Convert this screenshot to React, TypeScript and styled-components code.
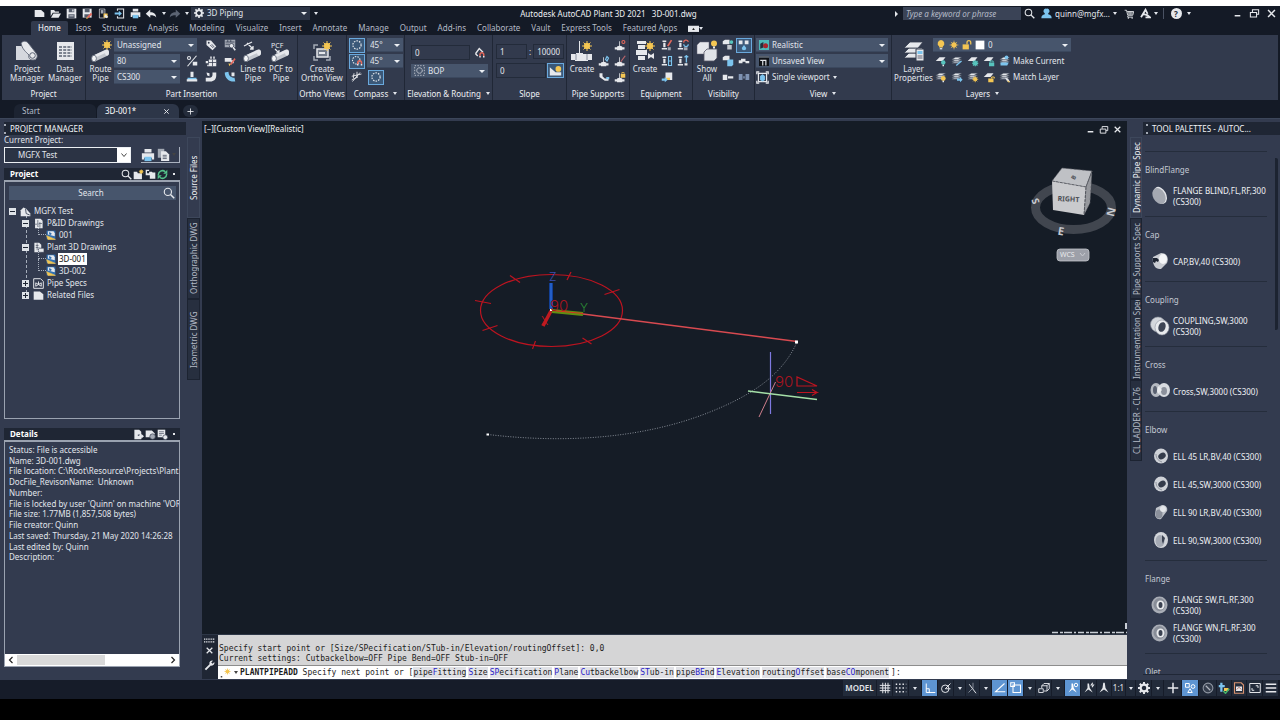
import React from "react";
import styled, { createGlobalStyle, css } from "styled-components";

const UI = `"Noto Sans", "Open Sans", sans-serif`;
const MONO = `"DejaVu Sans Mono", "Liberation Mono", monospace`;
const C = {
  chrome: "#141a26",
  panel: "#323a4d",
  dock: "#333b4f",
  well: "#1f2634",
  field: "#47556c",
  canvas: "#151c26",
  text: "#e2e6ec",
  dim: "#b4bac6",
  line: "#202736",
  active: "#5e95d2",
};

const Global = createGlobalStyle`
  * { box-sizing: border-box; }
  html, body { margin: 0; padding: 0; background: #000; }
  body { font-family: ${UI}; font-size: 8px; line-height: 10px; color: ${C.text}; }
  button, input, select { font: inherit; color: inherit; margin: 0; padding: 0; border: 0; background: none; border-radius: 0; min-width: 0; }
  ul { list-style: none; margin: 0; padding: 0; }
`;

/* ---------- icons ---------- */
const W = "#e6e8ec";
const G = "#a3a9b4";
const B = "#7cc4ee";
const Y = "#f4c653";
const R = "#e2685c";
const T = "#57c3bd";

const sun = (x: number, y: number, r: number) => (
  <g stroke={Y} strokeWidth={1} fill={Y}>
    <circle cx={x} cy={y} r={r * 0.55} />
    <path d={`M${x - r} ${y}H${x + r}M${x} ${y - r}V${y + r}M${x - r * 0.7} ${y - r * 0.7}L${x + r * 0.7} ${y + r * 0.7}M${x + r * 0.7} ${y - r * 0.7}L${x - r * 0.7} ${y + r * 0.7}`} />
  </g>
);
const magnet = (x: number, y: number) => (
  <g fill="none" strokeWidth={2}>
    <path stroke={R} d={`M${x} ${y + 4}V${y + 2}a2.5 2.5 0 0 1 5 0V${y + 4}`} />
    <path stroke={W} d={`M${x} ${y + 4}v2M${x + 5} ${y + 4}v2`} />
  </g>
);
const stack = (
  <g stroke="#4a5263" strokeWidth={0.6}>
    <path fill={G} d="M1 11l5-3h8l-5 3z" />
    <path fill="#c8ccd3" d="M1 8.500l5-3h8l-5 3z" />
    <path fill={W} d="M1 6l5-3h8l-5 3z" />
  </g>
);
const sheet = <path fill={W} d="M1 8l5-5h8l-4 5z" />;
const pipe = (
  <g>
    <path fill="#c3c7ce" d="M3 15.500l13-6a3 3.500 0 0 1 2 6l-13 6z" />
    <path fill={W} d="M2.500 16l13-6a3 3 0 0 1 2 2l-13 6z" />
    <ellipse cx="4" cy="18.500" rx="2.400" ry="3.200" fill="#f4f5f7" stroke="#5b6374" strokeWidth=".8" />
    <ellipse cx="17" cy="12.500" rx="2" ry="3" fill={W} />
  </g>
);
const vessel = (
  <g fill={W}>
    <path d="M2 2h5v2H2zM3 5h3v6H3zM1 12h7v2H1z" />
  </g>
);
const tee = <path fill={W} d="M1 11h3v-1l3-1V3h1v6l3 1v1h3v3h-3v1H4v-1H1z" />;

const ICONS: Record<string, React.ReactNode> = {
  new: <path fill={W} d="M1 3h9l5 4v6H1zM10 2.500l4.500 4H10z" />,
  open: <><path fill={W} d="M1 3h5l1.500 2H13v2H4l-3 5z" /><path fill={W} d="M5 8h11l-3.500 6H1.500z" /></>,
  save: <><path fill={W} d="M1 1h14v14H1z" /><path fill="#555d6c" d="M4 1h8v5H4zM3.500 9h9v6h-9z" /><path fill={W} d="M9 2h2v3H9zM5 11h6v1H5z" /></>,
  saveas: <><path fill={W} d="M1 1h13v13H1z" /><path fill="#555d6c" d="M4 1h7v5H4zM3.500 9h8v5h-8z" /><path fill={R} d="M7 13l6-6 2 2-6 6z" /><path fill={Y} d="M7 13l-1 3 3-1z" /></>,
  web: <><path fill="none" stroke={W} d="M2 1.500h8v13H2z" /><path fill={G} d="M4 3h4v5H4z" /><path fill={Y} d="M8 8h6v6H8z" /><path fill={W} d="M11 9l4 4-3 2-3-3z" /></>,
  cloud: <><path fill="none" stroke={W} strokeWidth="1.500" d="M5 4V1.500h9v13H5V12" /><path fill={B} d="M1 6.500h6V4l4.500 4L7 12V9.500H1z" /></>,
  print: <><path fill={W} d="M4 1h8v4H4zM1 6h14v7h-2.500v-2h-9v2H1z" /><path fill={B} d="M4 10h8v5H4z" /></>,
  undo: <path fill={W} d="M7 2v3.500c5 0 7.500 2 8 7C13 10 11 9.500 7 9.500V13L1 7.500z" />,
  redo: <path fill="#5b6373" d="M9 2v3.500c-5 0-7.500 2-8 7C3 10 5 9.500 9 9.500V13l6-5.500z" />,
  gear: <><circle cx="8" cy="8" r="4.500" fill="none" stroke={W} strokeWidth="3" /><path stroke={W} strokeWidth="2.600" d="M8 0v4M8 12v4M0 8h4M12 8h4M2.300 2.300l3 3M10.700 10.700l3 3M13.700 2.300l-3 3M5.300 10.700l-3 3" /><circle cx="8" cy="8" r="2.400" fill="#232b3a" /></>,
  lens: <><circle cx="6.500" cy="6.500" r="4.800" fill="none" stroke={W} strokeWidth="1.500" /><path stroke={W} strokeWidth="2" d="M10 10l5 5" /></>,
  user: <path fill={B} d="M8 1a3.500 3.500 0 0 1 2.500 6.500V9c3 .5 5 2 5 6H.5c0-4 2-5.500 5-6V7.500A3.500 3.500 0 0 1 8 1z" />,
  cart: <><path fill="none" stroke={W} strokeWidth="1.400" d="M1 2h3l2 8h8l1.500-6H5M6 11v2h8" /><path stroke={W} d="M6 6h9M7 8h7M8 4v6M11 4v6" /><circle cx="7" cy="14.500" r="1.200" fill={W} /><circle cx="13" cy="14.500" r="1.200" fill={W} /></>,
  adsk: <path fill="none" stroke={W} strokeWidth="2.600" d="M1.500 13.500L8 2.500l3 6M4 9.500c4-1 8 1 10.500 4H8" />,
  min: <path stroke={W} strokeWidth="2.600" d="M3 12h10" />,
  restore: <path fill="none" stroke={W} strokeWidth="1.500" d="M5 6V2.500h9V9h-3M2 6.500h9V13H2z" />,
  close: <path stroke={W} strokeWidth="2.200" d="M3 3l10 10M13 3L3 13" />,
  plus: <path stroke={W} strokeWidth="2" d="M8 1v14M1 8h14" />,
  tag: <><path fill={W} d="M2 2h6l7 8-5 5-8-7z" /><circle cx="5" cy="5" r="1.200" fill={C.panel} /><path stroke={C.panel} d="M7 8l4 4M9 7l3.500 4" /></>,
  find: <><path fill={G} d="M1 1h14v10H1z" /><path stroke={C.panel} d="M2 4h12M2 7h5M5 1v3M9 1v3" /><circle cx="10" cy="9" r="3" fill={W} stroke={C.panel} /><path stroke={W} strokeWidth="2" d="M12 11l3 4" /></>,
  slashes: <><circle cx="4" cy="4" r="2" fill="none" stroke={W} strokeWidth="1.500" /><path stroke={W} strokeWidth="1.500" d="M14 1L2 15" /><path fill={W} d="M9 9h6v5H9z" /></>,
  valve: <><path fill={W} d="M5 6h10v9H5z" /><path stroke={C.panel} d="M5 10h10M10 6v9" /><path fill={W} d="M1 8h3v3H1zM7 2h2v3H7zM11 2h2v3h-2zM3 13h2v2H3z" /></>,
  pipepen: <><path fill={W} d="M1 4h9v3h3v4H9V9H1z" /><path fill={R} d="M8 12l6-8 1.500 1.500-6 8z" /><path fill={Y} d="M6 11l3 1-2 3z" /></>,
  down: <><path fill={W} d="M6 1h4v7H6z" /><path fill={B} d="M2 9h12v3H2z" /><path fill={W} d="M1 11h14v3H1z" /></>,
  elbow: <path fill={W} d="M1 9h5c3 0 4-2 4-4V2h5v4c0 5-3 8-8 8H1zM2 2l4 1v4L3 6z" />,
  bend: <><path fill={B} d="M1 2l5-1c0 5 3 8 8 8l1 5C7 15 1 10 1 2z" /><path fill={W} d="M10 2h4v5h-4z" /></>,
  compass: <circle cx="8" cy="8" r="5.500" fill="none" stroke={W} strokeWidth="1.600" strokeDasharray="2 1.500" />,
  compassMag: <><circle cx="7" cy="7" r="5" fill="none" stroke={W} strokeWidth="1.500" strokeDasharray="2 1.500" />{magnet(9, 8)}</>,
  hatch: <path stroke={W} strokeWidth="1.200" fill="none" d="M2 14l10-12M1 7l13-3M4 3l-1 7M8 1v8M1 12l8-4" />,
  plane: <><path fill="none" stroke={W} strokeWidth="1.800" d="M2 9l5-7 5 5M2 9l3 3" />{magnet(8, 8)}</>,
  bop: <><circle cx="8" cy="8" r="4" fill="none" stroke={W} strokeWidth="1.400" strokeDasharray="2 1" /><path fill="none" stroke={W} strokeDasharray="2 2" d="M1 1h14v14H1z" /></>,
  slope: <><path fill={W} d="M1 4l7 6h7v4H1z" /><circle cx="11.500" cy="6" r="3.500" fill={Y} /></>,
  support: <>{tee}<circle cx="12.500" cy="4" r="2" fill="none" stroke={R} strokeWidth="1.500" /></>,
  supportB: <>{tee}<path fill="none" stroke={B} strokeWidth="1.600" d="M10 6l2-4 2 2-2 4z" /></>,
  supportC: <>{tee}<path stroke="#b9656a" strokeWidth="1.600" d="M9 9l6-8" /></>,
  supportD: <><path fill={W} d="M2 3h4v4l3 3h5v3H9L2 8z" /><path fill={B} d="M11 8h4v3h-4z" /></>,
  supportL: <>{tee}<path fill={Y} d="M9 4h6v5H9z" /><path fill="none" stroke={Y} d="M10.500 4V2h3v2" /></>,
  equipPen: <>{vessel}<path fill={R} d="M8 9l5-8 2 1-5 8z" /><path fill={G} d="M9 11h4v4H9z" /></>,
  equipX: <>{vessel}<path fill="none" stroke={R} strokeWidth="1.500" d="M9 5a3 3 0 0 1 6-1" /><path fill="none" stroke={B} strokeWidth="1.500" d="M9 7a3 3 0 0 0 6 0" /><path fill={G} d="M9 11h5v4H9z" /></>,
  equipA: <>{vessel}<path fill="none" stroke={B} strokeWidth="1.500" d="M10 2h4v6h-4zM10 8h4v6h-4z" /></>,
  equipB: <>{vessel}<path fill="none" stroke={B} strokeWidth="1.800" d="M12.500 1v9M10 3l2.500-2L15 3" /><path fill={W} d="M10 11h4v3h-4z" /></>,
  equipIn: <><path fill={W} d="M6 2h9v10H6z" /><path fill={Y} d="M7 9h5v3H7z" /><path fill={B} d="M1 10h4V8l4 3.500-4 3.500v-2H1z" /></>,
  cubes: <><path fill={W} d="M1 3l3-2h6v6H1z" /><path fill="#c3c7ce" d="M7 8h6v6H7z" /><circle cx="12.500" cy="4" r="2.500" fill={T} /></>,
  cubesB: <><path fill={W} d="M1 3l3-2h6v6H1z" /><path fill={B} d="M7 7l2-1h6v7l-2 2H7z" /></>,
  network: <><path fill={W} d="M1 2h5v5H1zM9 2h5v5H9z" /><path fill={B} d="M8 8l3 4a3 3 0 1 1-6 0z" /></>,
  fitting: <path fill={W} d="M1 7h3V5h6v3h5v3h-5V9H6v2H1z" />,
  fitting2: <path fill={W} d="M1 5h6v7H1zM8 7h7v3H8z" />,
  fitting3: <path fill="#7f93b3" d="M1 4h5v8H1zM7 7h2v3H7zM10 4h5v8h-5z" />,
  realistic: <><path fill="#4fb8b8" d="M0 0h16v16H0z" /><path fill="#24303d" d="M2 6l5-3v9l-5 2z" /><circle cx="10.500" cy="9" r="4" fill="#a7242c" /></>,
  unsaved: <><path fill="#0f1217" d="M0 0h16v16H0z" /><path fill="#59606b" d="M0 0h16v3H0z" /><path fill="none" stroke={W} strokeWidth="1.800" d="M6 15V7h5v8M2 7h3" /></>,
  viewport: <><path fill="none" stroke={W} strokeWidth="1.500" d="M1 4V1h3M12 1h3v3M15 12v3h-3M4 15H1v-3M3 3h10v10H3z" /><path fill={B} d="M5 6l3-2 3 2v5l-3 2-3-2z" /></>,
  bulb: <><path fill={Y} d="M8 0a5.500 5.500 0 0 1 3 10v2h-6v-2A5.500 5.500 0 0 1 8 0z" /><path fill={W} d="M6 13h4v2H6z" /></>,
  sun: sun(8, 8, 7),
  unlock: <><path fill={Y} d="M1 7h10v8H1z" /><path fill="none" stroke={Y} strokeWidth="2" d="M8 7V4a3 3 0 0 1 6 0v3" /></>,
  swatch: <path fill="#fff" d="M1 1h14v14H1z" />,
  layBulb: <>{sheet}<circle cx="11" cy="10" r="3" fill={T} /><path fill={W} d="M10 13h2v2h-2z" /></>,
  layFreeze: <>{sheet}<path stroke={T} strokeWidth="1.800" d="M7 11h8M11 7v8M8 8l6 6M14 8l-6 6" /></>,
  layLock: <>{sheet}<path fill={T} d="M8 10h7v5H8z" /><path fill="none" stroke={T} strokeWidth="1.300" d="M9.500 10V8h4v2" /></>,
  layUnlock: <>{sheet}<path fill={Y} d="M7 10h7v5H7z" /><path fill="none" stroke={Y} strokeWidth="1.300" d="M11.500 10V8H15v2" /></>,
  layMake: <>{stack}<path fill={B} d="M2 10h11l-2 4H2z" /><circle cx="10" cy="3" r="2.500" fill={B} /></>,
  layMatch: <>{stack}<path fill={W} d="M8 9l4 1 3 5-4-1z" /><path fill={Y} d="M11 12l4 3h-3z" /></>,
  layBulb2: <>{stack}<circle cx="11" cy="10" r="3.200" fill={Y} /><path fill={W} d="M10 13h2v2h-2z" /></>,
  layWalk: <>{stack}<path stroke={B} strokeWidth="1.800" d="M7 14l7-6" /></>,
  layPrev: <>{stack}<path fill={B} d="M8 10h4V8l3.500 3.500L12 15v-2H8z" /></>,
  laySun: <>{stack}{sun(11, 11, 4)}</>,
  docCopy: <><path fill={G} d="M1 1h8v11H1z" /><path fill={W} d="M5 4h6l4 4v8H5z" /><path stroke="#4a5263" d="M7 9h5M7 11h5M7 13h5" /></>,
  folderNew: <><path fill={W} d="M1 4h5l1 2h6v9H1z" />{sun(12, 4, 3.5)}</>,
  copyTree: <path fill={W} d="M1 1h5v2H3v3h3V4h4l1 1h4v9H7V9H1z" />,
  refresh: <><path fill="none" stroke="#54c08a" strokeWidth="2.200" d="M2 9a6 6 0 0 1 10-5M14 7a6 6 0 0 1-10 5" /><path fill="#54c08a" d="M15 1v6H9zM1 15V9h6z" /></>,
  project: <><path fill={W} d="M1 6l4-4 4 2 6 7v4H1z" /><path fill="none" stroke={C.dock} strokeWidth="1.200" d="M8 4l1 7 5 2" /></>,
  pid: <><path fill={W} d="M3 1h8l3 3v11H3z" /><path stroke="#4a5263" fill="none" d="M1 9h5M7 3v10M10 6v8M7 8h6" /></>,
  plant: <><path fill={W} d="M2 1h7l3 3v11H2z" /><path stroke="#4a5263" d="M4 5h4M4 8h5M6 2v10" /><path fill={W} stroke={C.dock} d="M8 9h8v6H8z" /></>,
  dwg: <><path fill="#2f6fb3" d="M1 1h14v14H1z" /><path fill={W} d="M3 2h9l2 3v5L3 7z" /><path fill="#2f6fb3" d="M5 3l4 2-1 3-3-1z" /><path fill={Y} d="M1 9l14 6H3z" stroke={Y} /></>,
  spec: <><path fill="none" stroke={W} strokeWidth="1.400" d="M1 1h10l4 4v10H1z" /><path fill="none" stroke={W} strokeWidth="1.400" d="M4 7l8 5V7l-8 5zM8 5v4" /></>,
  folder: <path fill={W} d="M1 2h9l5 4v8H1z" />,
  detA: <><path fill={W} d="M2 1h7l3 3v11H2z" /><path fill="#4a5263" d="M7 8h3v2H7z" /><path fill={W} d="M9 9h3V7l4 3.500-4 3.500v-2H9z" /></>,
  detB: <><path fill={W} d="M1 2h9l4 4v6H1z" /><circle cx="11" cy="11" r="4" fill={G} stroke="#3a4253" /></>,
  detC: <><path fill={W} d="M1 1h11v11H1z" /><path stroke="#4a5263" d="M3 4h7M3 6.500h7M3 9h4" /><circle cx="12" cy="12" r="3.500" fill={W} stroke="#3a4253" /></>,
  wrench: <path fill={W} d="M1 13l7-7a4 4 0 0 1 5-5l-2.500 2.500 2 2L15 3a4 4 0 0 1-5 5l-7 7z" />,
  grip: <path stroke={W} strokeWidth="2" strokeDasharray="1.600 1" d="M0 6h16M0 10h16" />,
  cmd: <><path fill="#444" d="M1 12h2v2H1z" />{sun(10, 6, 4)}</>,
  grid: <path stroke={W} strokeWidth="1.300" d="M5 1v14M8.500 1v14M12 1v14M1 4.500h14M1 8h14M1 11.500h14" />,
  dots: <path stroke={W} strokeWidth="1.900" strokeDasharray="1.900 2.600" d="M1 3h14M1 8h14M1 13h14" />,
  ortho: <path fill="none" stroke="#fff" strokeWidth="1.300" d="M3 2v12h12M3 9h4v5" />,
  polar: <><circle cx="7" cy="9" r="5" fill="none" stroke={W} strokeWidth="1.300" /><path stroke={W} strokeWidth="1.300" fill="none" d="M7 9l7-7M7 9h7" /></>,
  iso: <><path stroke={W} strokeWidth="1.300" d="M3 3l9 12" /><path stroke={G} d="M8 1v8M2 14l5-5" /></>,
  angle: <path fill="none" stroke="#fff" strokeWidth="1.400" d="M14 2L2 13h13" />,
  osnap: <><path fill="none" stroke="#fff" strokeWidth="1.400" d="M4 4h10v10H4z" /><path fill="none" stroke="#fff" strokeWidth="1.400" d="M1 1h5v5H1z" /></>,
  cube: <path fill="none" stroke={W} strokeWidth="1.200" d="M5 5l3-3h7v7l-3 3H8M5 8V5h7v7M12 5l3-3M1 9h6v5H1z" />,
  annA: <><path fill="#fff" d="M6 2h2l1 6 4 6-6-4-5 4 4-6z" /><circle cx="12" cy="4" r="2.300" fill="none" stroke="#fff" strokeWidth="1.300" /></>,
  annB: <><path fill={W} d="M6 2h2l1 6 4 6-6-4-5 4 4-6z" /><path stroke={W} strokeWidth="1.500" fill="none" d="M13 1l-2 3h3l-2 3" /></>,
  annC: <path fill={W} d="M7 1h2l1 7 4 6-6-4-6 4 4-6z" />,
  isolate: <><path fill="none" stroke="#fff" strokeWidth="1.300" d="M2 2h5v5H2zM5 14l3-5 3 5z" /><circle cx="12" cy="6" r="2.500" fill="none" stroke="#fff" strokeWidth="1.300" /></>,
  perf: <><circle cx="8" cy="8" r="6.500" fill="#353e4d" stroke="#8f96a2" strokeWidth="1.400" /><path stroke="#aeb4be" strokeWidth="1.600" d="M5 5l6 6" /></>,
  units: <><path fill={B} d="M1 4h8v3H1zM3 1h3v12H3z" /><path fill={Y} d="M8 8h6v4H8z" /><path fill="none" stroke="#45b36b" strokeWidth="2" d="M7 12l3 3 5-6" /></>,
  pdf: <><path fill="none" stroke="#d8926f" strokeWidth="1.500" d="M2 1h9l3 3v11H2z" /><path fill={W} d="M4 6h8v6H4z" /><path fill="none" stroke="#a44c3a" d="M5 10l3-3 3 3" /></>,
  full: <><path fill="none" stroke={W} strokeWidth="1.300" d="M1 2h14v12H1z" /><path stroke={W} strokeWidth="1.300" fill="none" d="M9 5h3v3M7 11H4V8" /></>,
  menu: <path stroke={W} strokeWidth="1.800" d="M1 3h14M1 8h14M1 13h14" />,
  chev: <path fill="none" stroke="#333" strokeWidth="1.800" d="M3 5l5 6 5-6" />,
  left: <path fill="none" stroke="#222" strokeWidth="2.400" d="M11 2L5 8l6 6" />,
  right: <path fill="none" stroke="#222" strokeWidth="2.400" d="M5 2l6 6-6 6" />,
  upbox: <><path fill={W} d="M0 4h16v9H0z" /><path fill="#222" d="M6 10l2-3 2 3z" /></>,
};

const Svg = styled.svg`display: block; flex: none;`;
const Icon = ({ n, s = 12 }: { n: string; s?: number }) => (
  <Svg width={s} height={s} viewBox="0 0 16 16" aria-hidden="true">{ICONS[n]}</Svg>
);

const BIG: Record<string, React.ReactNode> = {
  project: <><path fill="#d5d8de" d="M0 6h12l8 14H0z" /><path fill={W} stroke="#596172" strokeWidth=".9" d="M5 3c3-3 6-2 8 1l7 9c3 4 0 7-3 7s-5-2-4-5c-3-3-7-6-8-12z" /><circle cx="16.500" cy="15.500" r="2.800" fill="none" stroke="#596172" /></>,
  data: <><path fill={W} d="M3 2h17v18H3z" /><path stroke="#596172" strokeWidth="1.400" strokeDasharray="3 1.200" d="M5 7h13M5 10h13M5 13h13M5 16h13" /></>,
  route: <>{pipe}{sun(17, 5, 5)}</>,
  line: <><path stroke={W} strokeWidth="1.300" fill="none" d="M2 6l8-4M5 3l6 6M11 6v3H8" />{pipe}</>,
  pcf: <><path stroke={W} strokeWidth="1.200" fill="none" d="M5 9l4 4M9 10v3H6" /><text x="1" y="8" fontSize="7" fontFamily={UI} fill={W}>PCF</text>{pipe}</>,
  ortho: <><path fill="none" stroke={G} strokeWidth="1.500" d="M7 5H3v4M3 16v4h4M15 20h4v-4" /><path fill="#747c8a" stroke={W} strokeWidth="1.500" d="M6 9h11v8H6z" /><path stroke={W} d="M8 13h6" strokeWidth="2" />{sun(16, 6, 5)}</>,
  support: <><path fill={W} d="M8 1h1v12h3v1h9v6h-4v1H4v-1H0v-6h5v-1h3z" /><path stroke="#8a91a0" d="M5 14v6M16 14v6" />{sun(16, 6, 5)}</>,
  equip: <><path fill={W} d="M3 1h9v3H3zM4 5h7v4H4zM2 10h11v5H2zM4 16h7v4H4z" /><path fill={W} d="M14 13l3 2 3-2v6l-3-2-3 2z" />{sun(16, 6, 5)}</>,
  show: <><path fill={W} stroke="#667" strokeWidth=".5" d="M1 5l3-3h9v9l-3 3H1z" /><path fill="#e0e3e8" stroke="#556" strokeWidth=".8" d="M8 12l3-3h10v9l-3 3H8z" /><circle cx="18" cy="3.500" r="3" fill={Y} /><path fill={W} d="M17 6.500h2v2h-2z" /></>,
  layers: <><g fill={W} stroke={C.panel} strokeWidth=".8"><path d="M1 18l5-5h14l-5 5z" /><path d="M1 13l5-5h14l-5 5z" /><path d="M1 8l6-6h13l-5 6z" /></g><path fill={W} stroke={C.panel} d="M13 9h8v12h-8z" /><path fill={B} d="M14.500 11h5v3h-5z" /><path stroke="#667" d="M14.500 16h5M14.500 18h5" /></>,
};
const BigIcon = ({ n }: { n: string }) => <Svg width="22" height="22" viewBox="0 0 22 22" aria-hidden="true">{BIG[n]}</Svg>;

const Caret = styled.span<{ $dark?: boolean }>`
  flex: none; width: 0; height: 0;
  border: 2px solid transparent; border-top: 3px solid ${(p) => (p.$dark ? "#444" : C.text)}; border-bottom: 0;
`;

/* ---------- frame ---------- */
const Page = styled.div`min-height: 100vh; display: flex; flex-direction: column; background: #000; border-top: 6px solid #fff;`;
const AppFrame = styled.div`flex: 1; display: flex; flex-direction: column; background: ${C.chrome};`;
const BottomBand = styled.div`flex: none; height: 21px;`;

const TitleBar = styled.header`display: flex; align-items: center; height: 15px; padding-left: 31px;`;
const QuickAccess = styled.div`display: flex; align-items: center;`;
const ToolBtn = styled.button<{ $w?: number }>`
  display: flex; align-items: center; justify-content: center; flex: none;
  width: ${(p) => p.$w ?? 16}px; height: 15px;
`;
const AppTitle = styled.h1`flex: 1; margin: 0; text-align: center; font-size: 8px; font-weight: 400; white-space: pre; color: #eef0f4;`;
const TitleSearch = styled.input`
  width: 118px; height: 13px; padding: 0 3px; background: #3a4356; color: ${C.text};
  &::placeholder { color: #b4bac6; font-style: italic; opacity: 1; }
`;
const Account = styled.button`display: flex; align-items: center; justify-content: space-between; width: 76px; margin: 0 1px 0 4px; white-space: nowrap;`;
const Divider = styled.span`width: 1px; height: 11px; background: #4a5263; margin: 0 4px 0 3px;`;
const WindowButtons = styled.div`display: flex; margin-left: 36px;`;
const HelpBtn = styled(ToolBtn)`
  span { width: 11px; height: 11px; border-radius: 50%; background: ${W}; color: #222a38; font-weight: 700; line-height: 11px; }
`;
const Play = styled.span`border: 3px solid transparent; border-left: 3px solid ${W}; border-right: 0; margin-right: 5px;`;

const SelectWrap = styled.label<{ $w?: number; $h?: number; $flat?: boolean }>`
  position: relative; display: flex; align-items: center; gap: 3px; flex: none;
  width: ${(p) => (p.$w ? `${p.$w}px` : "100%")}; height: ${(p) => p.$h ?? 14}px; padding-left: 3px;
  background: ${(p) => (p.$flat ? "#2c3445" : C.field)};
  border-bottom: 1px solid ${(p) => (p.$flat ? "#2c3445" : "#3b485e")};
  &::after {
    content: ""; position: absolute; right: 3px; top: 50%; margin-top: -1px; pointer-events: none;
    border: 3px solid transparent; border-top-color: #eceff3; border-bottom: 0;
  }
  select { appearance: none; flex: 1; height: 100%; width: 100%; outline: 0; }
`;
type SelProps = { label: string; value: string; w?: number; h?: number; flat?: boolean; children?: React.ReactNode };
const Select = ({ label, value, w, h, flat, children }: SelProps) => (
  <SelectWrap $w={w} $h={h} $flat={flat}>
    {children}
    <select aria-label={label} defaultValue={value}><option>{value}</option></select>
  </SelectWrap>
);

/* ---------- ribbon ---------- */
const MenuTabs = styled.nav`display: flex; align-items: center; height: 14px; padding-left: 31px;`;
const MenuTab = styled.button<{ $on?: boolean }>`
  height: 14px; white-space: nowrap; border-radius: 2px 2px 0 0; color: ${C.dim}; padding: 0 6px 0 5px;
  ${(p) => p.$on && css`padding: 0 7px; margin-right: 3px; color: #fff; background: ${C.panel};`}
`;
const Ribbon = styled.div`display: flex; height: 65px; margin: 0 2px; background: ${C.panel};`;
const Panel = styled.section<{ $w: number; $last?: boolean }>`
  flex: none; display: flex; flex-direction: column; width: ${(p) => p.$w}px;
  border-right: ${(p) => (p.$last ? 0 : 1)}px solid ${C.line};
`;
const PanelBody = styled.div<{ $pad?: number; $gap?: number }>`
  flex: 1; display: flex; padding: 2px 1px 0 ${(p) => p.$pad ?? 2}px; gap: ${(p) => p.$gap ?? 0}px;
`;
const PanelName = styled.h2`
  display: flex; align-items: center; justify-content: center; gap: 5px; height: 13px; margin: 0;
  font-size: 8px; font-weight: 400; white-space: nowrap; color: #eef0f4;
`;
const BigBtn = styled.button<{ $w: number }>`
  flex: none; display: flex; flex-direction: column; align-items: center; gap: 2px;
  width: ${(p) => p.$w}px; height: 49px; padding-top: 3px; line-height: 9px; white-space: pre;
`;
const Rows = styled.div<{ $w?: number }>`display: flex; flex-direction: column; flex: none; width: ${(p) => (p.$w ? `${p.$w}px` : "auto")};`;
const Row = styled.div<{ $gap?: number; $end?: boolean }>`
  display: flex; align-items: center; height: 16px; gap: ${(p) => p.$gap ?? 0}px;
  justify-content: ${(p) => (p.$end ? "flex-end" : "flex-start")};
`;
const RowIcons = styled.div`display: flex; margin-left: auto;`;
const SmallBtn = styled.button<{ $w?: number; $on?: boolean }>`
  flex: none; display: flex; align-items: center; justify-content: center; width: ${(p) => p.$w ?? 16}px; height: 15px;
  ${(p) => p.$on && css`background: #3b5878; border: 1px solid #6aa9dd;`}
`;
const TextBtn = styled.button`display: flex; align-items: center; gap: 3px; white-space: nowrap;`;
const LayerBtn = styled(TextBtn)`padding-left: 2px; gap: 2px;`;
const NumField = styled.input<{ $w: number }>`
  width: ${(p) => p.$w}px; height: 15px; padding: 0 3px 1px; border: 1px solid #232b3a; background: ${C.panel};
`;
const Stack = styled.div<{ $pt: number }>`display: flex; flex-direction: column; gap: 4px; padding-top: ${(p) => p.$pt}px;`;
const Inline = styled.div<{ $gap?: number }>`display: flex; align-items: center; gap: ${(p) => p.$gap ?? 0}px;`;

const Name = ({ children, menu }: { children: string; menu?: boolean }) => <PanelName>{children}{menu && <Caret />}</PanelName>;

/* ---------- file tabs ---------- */
const FileTabs = styled.div`display: flex; align-items: flex-end; gap: 1px; height: 18px; padding-left: 14px;`;
const FileTab = styled.button<{ $on?: boolean }>`
  display: flex; align-items: center; justify-content: space-between; width: 82px; height: 14px; padding: 0 9px 0 8px;
  background: ${(p) => (p.$on ? "#2d3648" : "#1c2331")}; color: ${(p) => (p.$on ? "#fff" : C.dim)};
  border-radius: 6px 6px 0 0;
`;
const AddTab = styled.button`
  display: flex; align-items: center; justify-content: center; width: 15px; height: 12px; margin: 0 0 1px 3px;
  border-radius: 6px; background: #242c3b;
`;

/* ---------- docks ---------- */
const Main = styled.main`flex: 1; display: flex; background: ${C.dock}; border-top: 1px solid #3c465a; min-height: 560px;`;
const LeftDock = styled.aside`flex: none; display: flex; width: 202px; padding: 3px 2px 0 4px;`;
const LeftCol = styled.div`flex: 1; min-width: 0; display: flex; flex-direction: column; padding: 0 7px 13px 0;`;
const DockHead = styled.h2`
  display: flex; align-items: center; gap: 4px; height: 13px; margin: 0 -6px 0 0;
  background: ${C.well}; font-size: 8px; font-weight: 400; white-space: nowrap; color: #f2f4f7;
  &::before { content: ""; width: 2px; height: 6px; border-top: 2px solid ${G}; border-bottom: 2px solid ${G}; }
`;
const FieldLabel = styled.label`display: block; height: 12px; line-height: 10px; color: ${C.text};`;
const ProjectRow = styled.div`display: flex; gap: 10px; height: 16px; margin-bottom: 5px;`;
const ProjectSelect = styled.div`
  display: flex; flex: none; width: 127px; border: 1px solid #eceff3; background: #2b3344;
  select { appearance: none; flex: 1; padding-left: 13px; outline: 0; }
  span { display: flex; align-items: center; justify-content: center; width: 13px; background: #fff; }
`;
const PrintGroup = styled.div`
  flex: 1; display: flex; align-items: center; justify-content: space-between; padding: 0 3px 0 0;
  border-right: 1px solid #aab2bf; border-bottom: 1px solid #aab2bf;
`;
const SectionBar = styled.div`
  display: flex; align-items: center; gap: 1px; height: 12px; padding: 0 5px 0 6px; background: ${C.well};
  h3 { flex: 1; margin: 0; font-size: 8px; font-weight: 700; color: #fff; }
`;
const DetailsBar = styled(SectionBar)`margin-top: 9px;`;
const Dot = styled.span`width: 2px; height: 2px; background: ${W}; margin-left: 4px;`;
const Boxed = styled.div<{ $h?: number }>`
  display: flex; flex-direction: column; overflow: hidden; border: 1px solid #9aa2b0; border-top-width: 2px;
  ${(p) => (p.$h ? `height: ${p.$h}px; flex: none;` : "flex: 1;")}
`;
const TreeSearch = styled.label`
  display: flex; align-items: center; height: 14px; margin: 4px 3px 5px 4px; padding-right: 1px; background: ${C.field};
  input { flex: 1; text-align: center; padding-left: 20px; outline: 0; }
  input::placeholder { color: ${C.text}; opacity: 1; }
`;
const Tree = styled.ul`
  position: relative;
  &::before { content: ""; position: absolute; left: 21px; top: 10px; height: 78px; border-left: 1px dashed #a5adba; }
`;
const TreeRow = styled.li<{ $pad: number; $sel?: boolean }>`
  position: relative; display: flex; align-items: center; height: 12px; padding-left: ${(p) => p.$pad}px; white-space: nowrap;
  a { margin-left: 2px; padding: 0 1px; line-height: 12px; text-decoration: none;
      background: ${(p) => (p.$sel ? "#fff" : "transparent")}; color: ${(p) => (p.$sel ? "#111" : C.text)}; }
`;
const Expander = styled.span<{ $open?: boolean }>`
  display: flex; align-items: center; justify-content: center; width: 7px; height: 7px; margin-right: 4px; background: #dfe3e8;
  &::before { content: ""; width: 5px; height: 1px; background: #1f2634; }
  &::after { content: ""; width: 1px; height: 5px; margin-left: -3px; margin-right: 2px; background: ${(p) => (p.$open ? "transparent" : "#1f2634")}; }
`;
const Branch = styled.span`width: 8px; height: 12px; border-left: 1px dotted #a5adba; margin-top: -12px; border-bottom: 1px dotted #a5adba;`;
const Details = styled.div`
  flex: 1; display: flex; flex-direction: column; padding: 3px 0 0 4px; overflow: hidden;
  ul { display: grid; grid-auto-rows: 1fr; height: 118px; }
  li { white-space: pre; line-height: 10px; }
`;
const HScroll = styled.div`
  display: flex; align-items: center; justify-content: space-between; height: 12px; padding: 0 2px; background: #fff;
  span { flex: 1; height: 10px; margin: 0 2px; background: linear-gradient(90deg, #d9d9d9 59%, #fff 59%); }
`;
const VTabs = styled.div<{ $w: number }>`flex: none; display: flex; flex-direction: column; width: ${(p) => p.$w}px; padding-top: 15px;`;
const VTab = styled.button<{ $on?: boolean }>`
  height: 81px; writing-mode: vertical-rl; transform: rotate(180deg); text-align: center; white-space: nowrap; overflow: hidden;
  line-height: 12px; border: 1px solid ${(p) => (p.$on ? "#3d475b" : "#1c2331")};
  background: ${(p) => (p.$on ? C.dock : "#272f3f")}; color: ${(p) => (p.$on ? "#f2f4f7" : C.dim)};
`;

/* ---------- drawing area ---------- */
const Center = styled.div`flex: 1; display: flex; flex-direction: column; min-width: 0; padding-top: 2px;`;
const Canvas = styled.div`position: relative; flex: 1; background: ${C.canvas}; overflow: hidden;`;
const ViewLabel = styled.div`position: absolute; left: 2px; top: 3px; color: #f0f2f5; white-space: nowrap;`;
const CanvasWindow = styled.div`position: absolute; right: 5px; top: 4px; display: flex; gap: 4px;`;
const Drawing = styled.svg`position: absolute; inset: 0; width: 100%; height: 100%;`;
const ViewCube = styled.svg`position: absolute; right: 8px; top: 42px;`;
const CommandLine = styled.div`flex: none; display: flex; height: 45px; border-top: 1px solid #2d3646; margin-bottom: 1px;`;
const CommandTools = styled.div`display: flex; flex-direction: column; align-items: center; width: 16px; padding-right: 2px; background: ${C.well}; svg:last-child { margin-top: 5px; }`;
const CommandBody = styled.div`flex: 1; display: flex; flex-direction: column; min-width: 0; font-family: ${MONO}; color: #1c1c1c; white-space: pre;`;
const History = styled.div`flex: 1; padding: 9px 1px 0; background: #d5d5d6; border-bottom: 1px solid #8d8d8d; line-height: 10px;`;
const Prompt = styled.div`display: flex; align-items: center; height: 13px; padding-left: 2px; background: #fff;`;
const Option = styled.button`background: #e0e1e6; color: #1c1c1c; margin-right: 2px; height: 11px; line-height: 11px; b { font-weight: 400; color: #2a22c8; }`;

/* ---------- tool palettes ---------- */
const RightDock = styled.aside`flex: none; display: flex; width: 153px; padding: 3px 0 0 3px;`;
const Palette = styled.div`flex: 1; display: flex; flex-direction: column; min-width: 0; margin-left: 1px; height: 553px; overflow: hidden;`;
const PaletteHead = styled(DockHead)`margin: 0 0 16px; padding-left: 3px; gap: 4px;`;
const PaletteBody = styled.div`flex: 1; display: flex; min-height: 0; border-bottom: 1px solid ${C.line};`;
const Groups = styled.div`flex: 1; min-width: 0; overflow: hidden; padding-left: 2px;`;
const Group = styled.section`
  border-top: 1px solid #252d3c; padding: 12px 0 6px;
  h3 { margin: 0 0 7px; height: 11px; font-size: 8px; line-height: 11px; font-weight: 400; color: #c3c9d3; }
`;
const Tool = styled.button`
  display: flex; align-items: center; gap: 3px; width: 100%; height: 28px; padding-left: 5px; text-align: left; line-height: 11px; white-space: pre; color: #eef0f4;
`;
const Thumb = styled.div`width: 11px; height: 172px; margin-top: 7px; border-right: 3px solid #1c2331; margin-right: 2px; border-radius: 2px;`;

/* ---------- status bar ---------- */
const Status = styled.footer`display: flex; align-items: flex-start; justify-content: flex-end; height: 19px; padding-right: 2px; background: #161c29;`;
const Cell = styled.button<{ $w: number; $on?: boolean }>`
  display: flex; align-items: center; justify-content: center; width: ${(p) => p.$w}px; height: 16px;
  font-weight: ${(p) => (p.$w > 30 ? 600 : 400)};
  border-left: 1px solid #161c29; background: ${(p) => (p.$on ? C.active : "#222b3a")};
`;

const TABS = ["Home", "Isos", "Structure", "Analysis", "Modeling", "Visualize", "Insert", "Annotate", "Manage", "Output", "Add-ins", "Collaborate", "Vault", "Express Tools", "Featured Apps"];

const STATUS: [string, number, boolean?][] = [
  ["grid", 16], ["dots", 16], ["v", 13], ["ortho", 16, true], ["polar", 16], ["v", 12], ["iso", 14], ["v", 12],
  ["angle", 16, true], ["osnap", 16, true], ["v", 12], ["cube", 16], ["v", 13], ["annA", 16, true], ["annB", 16], ["annC", 15],
  ["1:1", 14], ["v", 10], ["gear", 16], ["v", 12], ["plus", 18], ["isolate", 17, true], ["perf", 18], ["units", 15], ["pdf", 15], ["full", 16], ["menu", 16],
];

const DETAILS = [
  "Status: File is accessible", "Name: 3D-001.dwg", "File location: C:\\Root\\Resource\\Projects\\Plant3", "DocFile_RevisonName:  Unknown", "Number:",
  "File is locked by user 'Quinn' on machine 'VOR", "File size: 1.77MB (1,857,508 bytes)", "File creator: Quinn",
  "Last saved: Thursday, 21 May 2020 14:26:28", "Last edited by: Quinn", "Description:",
];

const OPTIONS: [string, string, string][] = [
  ["pipe", "F", "itting"], ["", "S", "ize"], ["", "SP", "ecification"], ["", "P", "lane"], ["", "Cu", "tbackelbow"], ["", "ST", "ub-in"],
  ["pipe", "BE", "nd"], ["", "E", "levation"], ["routing", "O", "ffset"], ["base", "CO", "mponent"],
];

const fittings: Record<string, React.ReactNode> = {
  blind: <><ellipse cx="10.500" cy="9.500" rx="6" ry="9" transform="rotate(-28 10 10)" fill="#e4e6ea" /><ellipse cx="9" cy="10" rx="6" ry="8.600" transform="rotate(-28 9 10)" fill="#a5a9b2" /></>,
  cap: <><path fill="#c9ccd2" d="M3 6l8-4c6 0 8 5 6 10l-6 6c-6 1-9-5-8-12z" /><ellipse cx="13" cy="8" rx="4" ry="5" fill="#f4f5f7" /><path fill="#1c2331" d="M3 7l4 0 2 2-1 2-2-1-1 2-2-1z" /></>,
  ring: <><ellipse cx="8" cy="8.500" rx="7.500" ry="7.500" fill="#d4d7dc" stroke="#8d929d" strokeWidth=".6" /><ellipse cx="12" cy="11.500" rx="7" ry="7.500" fill="#e8eaed" stroke="#8d929d" strokeWidth=".6" /><ellipse cx="12" cy="11" rx="3.500" ry="5" transform="rotate(20 12 11)" fill="#3d4454" /></>,
  cross: <><ellipse cx="6" cy="9" rx="5.500" ry="7" fill="#b5b9c1" /><ellipse cx="14" cy="9" rx="6" ry="7" fill="#d8dbe0" /><ellipse cx="5" cy="9" rx="2" ry="4" fill="#596070" /><ellipse cx="14" cy="10" rx="3" ry="4" fill="#8b909b" /><path fill="#e9ebee" d="M8 5l4 4-4 4-1-3z" /></>,
  ell: <><ellipse cx="11" cy="10" rx="7" ry="7.500" fill="#cfd2d8" /><ellipse cx="12" cy="10" rx="4" ry="3" transform="rotate(-35 12 10)" fill="#343b4b" /><path fill="none" stroke="#8f949f" strokeWidth="1" d="M6 8c0 5 3 7 6 8" /></>,
  ell90: <><path fill="#bfc3ca" d="M6 6l6-3c4 0 6 3 5 6l-6 8c-4 1-6-2-6-5z" /><ellipse cx="9" cy="12" rx="3.500" ry="4.500" fill="#8b909b" /><ellipse cx="13" cy="7" rx="3" ry="3" fill="#e4e6ea" /></>,
  ellSw: <><ellipse cx="11" cy="10" rx="7" ry="8" fill="#d3d6db" /><ellipse cx="10" cy="11" rx="4.500" ry="6" fill="#a5aab4" /><path fill="#3b4252" d="M12 5l3 3-2 6-1-3z" /></>,
  flange: <><ellipse cx="9.500" cy="10" rx="8" ry="8.500" fill="#a9adb6" /><ellipse cx="9.500" cy="9.500" rx="6" ry="6.500" fill="#888d98" /><ellipse cx="10.500" cy="10" rx="4" ry="4.500" fill="#e9ebee" /><ellipse cx="10.500" cy="10" rx="2" ry="3" fill="#3b4252" /></>,
};

const PALETTE: { name: string; tools: [string, string][] }[] = [
  { name: "BlindFlange", tools: [["blind", "FLANGE BLIND,FL,RF,300\n(CS300)"]] },
  { name: "Cap", tools: [["cap", "CAP,BV,40 (CS300)"]] },
  { name: "Coupling", tools: [["ring", "COUPLING,SW,3000\n(CS300)"]] },
  { name: "Cross", tools: [["cross", "Cross,SW,3000 (CS300)"]] },
  { name: "Elbow", tools: [["ell", "ELL 45 LR,BV,40 (CS300)"], ["ell", "ELL 45,SW,3000 (CS300)"], ["ell90", "ELL 90 LR,BV,40 (CS300)"], ["ellSw", "ELL 90,SW,3000 (CS300)"]] },
  { name: "Flange", tools: [["flange", "FLANGE SW,FL,RF,300\n(CS300)"], ["flange", "FLANGE WN,FL,RF,300\n(CS300)"]] },
  { name: "Olet", tools: [] },
];

const Btns = ({ names, w }: { names: string[]; w?: number }) => (
  <>{names.map((n, i) => <SmallBtn key={i} $w={w} aria-label={n}><Icon n={n} /></SmallBtn>)}</>
);

function RibbonBar() {
  return (
    <Ribbon>
      <Panel $w={84}>
        <PanelBody $pad={6}>
          <BigBtn $w={38}><BigIcon n="project" />{"Project\nManager"}</BigBtn>
          <BigBtn $w={38}><BigIcon n="data" />{"Data\nManager"}</BigBtn>
        </PanelBody>
        <Name>Project</Name>
      </Panel>
      <Panel $w={212}>
        <PanelBody $pad={1}>
          <BigBtn $w={27}><BigIcon n="route" />{"Route\nPipe"}</BigBtn>
          <Rows $w={125}>
            <Row><Select label="Line number" value="Unassigned" w={83} /><RowIcons><Btns names={["tag", "find"]} w={19} /></RowIcons></Row>
            <Row><Select label="Size" value="80" w={66} /><RowIcons><Btns names={["slashes", "valve", "pipepen"]} w={19} /></RowIcons></Row>
            <Row><Select label="Spec" value="CS300" w={66} /><RowIcons><Btns names={["down", "elbow", "bend"]} w={19} /></RowIcons></Row>
          </Rows>
          <BigBtn $w={28}><BigIcon n="line" />{"Line to\nPipe"}</BigBtn>
          <BigBtn $w={28}><BigIcon n="pcf" />{"PCF to\nPipe"}</BigBtn>
        </PanelBody>
        <Name>Part Insertion</Name>
      </Panel>
      <Panel $w={49}>
        <PanelBody $pad={1}><BigBtn $w={46}><BigIcon n="ortho" />{"Create\nOrtho View"}</BigBtn></PanelBody>
        <Name>Ortho Views</Name>
      </Panel>
      <Panel $w={58}>
        <PanelBody>
          <Rows $w={54}>
            <Row $gap={2}><SmallBtn $on aria-label="Toggle compass"><Icon n="compass" /></SmallBtn><Select label="Tick marks" value="45°" w={36} /></Row>
            <Row $gap={2}><SmallBtn $on aria-label="Toggle snaps"><Icon n="compassMag" /></SmallBtn><Select label="Snap increment" value="45°" w={36} /></Row>
            <Row $gap={3}><SmallBtn aria-label="Tolerance routing"><Icon n="hatch" /></SmallBtn><SmallBtn $on aria-label="Change plane"><Icon n="compass" /></SmallBtn></Row>
          </Rows>
        </PanelBody>
        <Name menu>Compass</Name>
      </Panel>
      <Panel $w={88}>
        <PanelBody $pad={6}>
          <Stack $pt={8}>
            <Inline $gap={2}><NumField $w={59} aria-label="Elevation" defaultValue="0" /><SmallBtn aria-label="Plane snap"><Icon n="plane" /></SmallBtn></Inline>
            <Select label="Routing" value="BOP" w={77}><Icon n="bop" s={11} /></Select>
          </Stack>
        </PanelBody>
        <Name menu>Elevation & Routing</Name>
      </Panel>
      <Panel $w={74}>
        <PanelBody $pad={3}>
          <Stack $pt={7}>
            <Inline $gap={2}><NumField $w={31} aria-label="Slope rise" defaultValue="1" />:<NumField $w={31} aria-label="Slope run" defaultValue="10000" /></Inline>
            <Inline $gap={1}><NumField $w={50} aria-label="Slope offset" defaultValue="0" /><SmallBtn $on $w={17} aria-label="Toggle slope"><Icon n="slope" s={13} /></SmallBtn></Inline>
          </Stack>
        </PanelBody>
        <Name>Slope</Name>
      </Panel>
      <Panel $w={63}>
        <PanelBody $pad={1}>
          <BigBtn $w={28}><BigIcon n="support" />Create</BigBtn>
          <Rows $w={32}>
            <Row $end><Btns names={["support"]} /></Row>
            <Row $end><Btns names={["supportB", "supportC"]} /></Row>
            <Row $end><Btns names={["supportD", "supportL"]} /></Row>
          </Rows>
        </PanelBody>
        <Name>Pipe Supports</Name>
      </Panel>
      <Panel $w={63}>
        <PanelBody $pad={1}>
          <BigBtn $w={28}><BigIcon n="equip" />Create</BigBtn>
          <Rows $w={32}>
            <Row><Btns names={["equipPen", "equipX"]} /></Row>
            <Row><Btns names={["equipA", "equipB"]} /></Row>
            <Row><Btns names={["equipIn"]} /></Row>
          </Rows>
        </PanelBody>
        <Name>Equipment</Name>
      </Panel>
      <Panel $w={62}>
        <PanelBody $pad={1}>
          <BigBtn $w={26}><BigIcon n="show" />{"Show\nAll"}</BigBtn>
          <Rows $w={33}>
            <Row><Btns names={["cubes"]} /><SmallBtn $on aria-label="Isolate network"><Icon n="network" /></SmallBtn></Row>
            <Row><Btns names={["cubesB", "fitting"]} /></Row>
            <Row><Btns names={["fitting2", "fitting3"]} /></Row>
          </Rows>
        </PanelBody>
        <Name>Visibility</Name>
      </Panel>
      <Panel $w={137}>
        <PanelBody $pad={1}>
          <Rows $w={132}>
            <Row><Select label="Visual style" value="Realistic"><Icon n="realistic" s={10} /></Select></Row>
            <Row><Select label="View" value="Unsaved View"><Icon n="unsaved" s={10} /></Select></Row>
            <Row><TextBtn><Icon n="viewport" s={13} />Single viewport<Caret /></TextBtn></Row>
          </Rows>
        </PanelBody>
        <Name menu>View</Name>
      </Panel>
      <Panel $w={181} $last>
        <PanelBody>
          <BigBtn $w={39}><BigIcon n="layers" />{"Layer\nProperties"}</BigBtn>
          <Rows $w={138}>
            <Row>
              <Select label="Layer" value="0"><Icon n="bulb" s={10} /><Icon n="sun" s={10} /><Icon n="unlock" s={10} /><Icon n="swatch" s={10} /></Select>
            </Row>
            <Row><Btns names={["layBulb", "layWalk", "layFreeze", "layLock"]} /><LayerBtn><Icon n="layMake" />Make Current</LayerBtn></Row>
            <Row><Btns names={["layBulb2", "layPrev", "laySun", "layUnlock"]} /><LayerBtn><Icon n="layMatch" />Match Layer</LayerBtn></Row>
          </Rows>
        </PanelBody>
        <Name menu>Layers</Name>
      </Panel>
    </Ribbon>
  );
}

function ProjectManager() {
  return (
    <LeftDock>
      <LeftCol>
        <DockHead>PROJECT MANAGER</DockHead>
        <FieldLabel htmlFor="project">Current Project:</FieldLabel>
        <ProjectRow>
          <ProjectSelect>
            <select id="project" defaultValue="MGFX Test"><option>MGFX Test</option></select>
            <span><Icon n="chev" s={8} /></span>
          </ProjectSelect>
          <PrintGroup><Icon n="print" s={14} /><Icon n="docCopy" s={13} /><Caret $dark /></PrintGroup>
        </ProjectRow>
        <SectionBar><h3>Project</h3><Icon n="lens" s={11} /><Icon n="folderNew" s={11} /><Icon n="copyTree" s={11} /><Icon n="refresh" s={11} /><Dot /></SectionBar>
        <Boxed $h={239}>
          <TreeSearch><input type="search" aria-label="Search project" placeholder="Search" /><Icon n="lens" s={12} /></TreeSearch>
          <Tree>
            <TreeRow $pad={4}><Expander $open /><Icon n="project" s={11} /><a href="#p">MGFX Test</a></TreeRow>
            <TreeRow $pad={17}><Expander $open /><Icon n="pid" s={11} /><a href="#p">P&ID Drawings</a></TreeRow>
            <TreeRow $pad={33}><Branch /><Icon n="dwg" s={10} /><a href="#p">001</a></TreeRow>
            <TreeRow $pad={17}><Expander $open /><Icon n="plant" s={11} /><a href="#p">Plant 3D Drawings</a></TreeRow>
            <TreeRow $pad={33} $sel><Branch /><Icon n="dwg" s={10} /><a href="#p">3D-001</a></TreeRow>
            <TreeRow $pad={33}><Branch /><Icon n="dwg" s={10} /><a href="#p">3D-002</a></TreeRow>
            <TreeRow $pad={17}><Expander /><Icon n="spec" s={11} /><a href="#p">Pipe Specs</a></TreeRow>
            <TreeRow $pad={17}><Expander /><Icon n="folder" s={11} /><a href="#p">Related Files</a></TreeRow>
          </Tree>
        </Boxed>
        <DetailsBar><h3>Details</h3><Icon n="detA" s={11} /><Icon n="detB" s={11} /><Icon n="detC" s={11} /><Dot /></DetailsBar>
        <Boxed>
          <Details><ul>{DETAILS.map((d) => <li key={d}>{d}</li>)}</ul></Details>
          <HScroll><Icon n="left" s={8} /><span /><Icon n="right" s={8} /></HScroll>
        </Boxed>
      </LeftCol>
      <VTabs $w={13}>
        <VTab $on>Source Files</VTab><VTab>Orthographic DWG</VTab><VTab>Isometric DWG</VTab>
      </VTabs>
    </LeftDock>
  );
}

const TICKS = [[515, 279, 10, 7], [569, 276, -4, 8], [612, 292, 15, -5], [483, 302, 16, 3], [490, 328, 15, -5], [534, 345, -3, 8], [587, 341, 9, 6]];

function DrawingArea() {
  return (
    <Center>
      <Canvas>
        <Drawing viewBox="202 121 925 513" preserveAspectRatio="xMidYMid meet" aria-label="Model viewport">
          <g fill="none" stroke="#bd1420" strokeWidth="1.200">
            <ellipse cx="551.500" cy="310.500" rx="71" ry="36" />
            {TICKS.map(([x, y, dx, dy]) => <path key={x} d={`M${x - dx / 2} ${y - dy / 2}l${dx} ${dy}`} />)}
            <path d="M797 377v9h20zM797 392.500h20l-5-3M817 392.500l-5 3" />
          </g>
          <path stroke="#123f94" strokeWidth="4" d="M551 283V309" />
          <path stroke="#2a6ad8" strokeWidth="1.500" d="M551 283V309" />
          <path stroke="#c01a20" strokeWidth="3.500" d="M551 311l-8 15" />
          <path stroke="#5f8f12" strokeWidth="4" d="M552 311l31 3" />
          <path stroke="#d8331f" strokeWidth="1" d="M552 310.500l31 3" />
          <path stroke="#d84a50" strokeWidth="1.500" d="M583 314L797 341.500" />
          <path fill="none" stroke="#a2a8b2" strokeWidth=".8" strokeDasharray="1 1.500" d="M488 434.500C560 443 640 440 710 412C750 396 782 376 797 342" />
          <path stroke="#7f79e0" strokeWidth="1.200" d="M770.500 352V414" />
          <path stroke="#cf7f8c" d="M775.500 382L759 417" />
          <path stroke="#a5e0a8" strokeWidth="1.300" d="M748 391L817 399.500" />
          <path fill="#fff" d="M795 340.500h3v3h-3zM486.500 433.500h2.500v2h-2.500zM550 309h2v2h-2z" />
          <g fontFamily="Inter, 'Liberation Sans', sans-serif" fontWeight="300">
            <text x="550" y="311" fontSize="15" fill="#a81420">90</text>
            <text x="775" y="387" fontSize="15" fill="#a81420">90</text>
            <text x="549" y="281" fontSize="12" fill="#3b4fb0">Z</text>
            <text x="580" y="312" fontSize="12" fill="#2b8a35">Y</text>
            <text x="541" y="325" fontSize="11" fill="#c01a20">X</text>
          </g>
          <path stroke="#c9ced6" strokeWidth="1.500" strokeDasharray="6 2 3 1 8 2 2 2" d="M1052 632.500h75" />
          <path stroke="#c9ced6" strokeWidth="2" d="M1126 623v6" />
        </Drawing>
        <ViewLabel>[−][Custom View][Realistic]</ViewLabel>
        <CanvasWindow><Icon n="min" s={9} /><Icon n="restore" s={10} /><Icon n="close" s={9} /></CanvasWindow>
        <ViewCube width="92" height="104" viewBox="1027 163 92 104" aria-label="View cube">
          <ellipse cx="1073.500" cy="207.500" rx="38" ry="22" fill="none" stroke="#41464f" strokeWidth="9" />
          <path fill="#bfc1c5" d="M1052 181l10-13 30 3-6 16z" stroke="#55585f" strokeWidth=".6" strokeDasharray="3 1" />
          <path fill="#c9cacd" d="M1052 181l34 6-2 28-31-5z" />
          <path fill="#96989d" d="M1086 187l6-16-2 32-6 12z" stroke="#55585f" strokeWidth=".6" strokeDasharray="2 2" />
          <path fill="none" stroke="#4b4e55" strokeWidth=".7" strokeDasharray="3 1" d="M1052 181l34 6 6-16M1086 187l-2 28" />
          <g fontFamily={UI} textAnchor="middle" fontWeight="700">
            <text x="1068.500" y="201.500" fontSize="7" fill="#4c4f56" transform="rotate(3 1068 199)">RIGHT</text>
            <text x="1073" y="180" fontSize="6" fill="#4c4f56" transform="rotate(-60 1073 177)">B</text>
            <text x="1036" y="205" fontSize="10" fill="#c8cacf" transform="rotate(70 1036 201)">S</text>
            <text x="1061" y="235" fontSize="11" fill="#c8cacf" transform="rotate(10 1061 231)">E</text>
            <text x="1111" y="216" fontSize="11" fill="#c8cacf" transform="rotate(-75 1111 212)">N</text>
          </g>
          <rect x="1057" y="249" width="32" height="12" rx="3" fill="#9da0a9" stroke="#c4c6cc" strokeWidth=".8" />
          <text x="1060" y="257" fontSize="7" fontFamily={UI} fill="#e8e9ec">WCS</text>
          <path fill="none" stroke="#c7c9cf" d="M1080 253l2.500 3 2.500-3" />
        </ViewCube>
      </Canvas>
      <CommandLine>
        <CommandTools><Icon n="grip" s={11} /><Icon n="close" s={9} /><Icon n="wrench" s={11} /></CommandTools>
        <CommandBody>
          <History>{"Specify start point or [Size/SPecification/STub-in/Elevation/routingOffset]: 0,0\nCurrent settings: Cutbackelbow=OFF Pipe Bend=OFF Stub-in=OFF"}</History>
          <Prompt>
            <Inline $gap={2}><Icon n="cmd" s={12} /><Caret $dark /><b>PLANTPIPEADD</b></Inline>{" Specify next point or ["}
            {OPTIONS.map(([a, b, c]) => <Option key={b + c}>{a}<b>{b}</b>{c}</Option>)}{"]:"}
          </Prompt>
        </CommandBody>
      </CommandLine>
    </Center>
  );
}

function ToolPalettes() {
  return (
    <RightDock>
      <VTabs $w={12}>
        <VTab $on>Dynamic Pipe Spec</VTab><VTab>Pipe Supports Spec</VTab><VTab>Instrumentation Spec</VTab><VTab>CL LADDER - CL76</VTab>
      </VTabs>
      <Palette>
        <PaletteHead>TOOL PALETTES - AUTOC...</PaletteHead>
        <PaletteBody>
          <Groups>
            {PALETTE.map((g) => (
              <Group key={g.name}>
                <h3>{g.name}</h3>
                {g.tools.map(([icon, label]) => (
                  <Tool key={label}><Svg width="20" height="20" viewBox="0 0 20 20" aria-hidden="true">{fittings[icon]}</Svg>{label}</Tool>
                ))}
              </Group>
            ))}
          </Groups>
          <Thumb />
        </PaletteBody>
      </Palette>
    </RightDock>
  );
}

export default function App() {
  return (
    <Page>
      <Global />
      <AppFrame>
        <TitleBar>
          <QuickAccess>
            {["new", "open", "save", "saveas", "web", "cloud", "print"].map((n) => <ToolBtn key={n} aria-label={n}><Icon n={n} s={11} /></ToolBtn>)}
            <ToolBtn aria-label="Undo"><Icon n="undo" s={12} /></ToolBtn><ToolBtn $w={9} aria-label="Undo list"><Caret /></ToolBtn>
            <ToolBtn aria-label="Redo" $w={14}><Icon n="redo" s={12} /></ToolBtn><ToolBtn $w={9} aria-label="Redo list"><Caret /></ToolBtn>
            <Select label="Workspace" value="3D Piping" w={119} h={13} flat><Icon n="gear" s={10} /></Select>
            <ToolBtn $w={12} aria-label="Customize"><Caret /></ToolBtn>
          </QuickAccess>
          <AppTitle>{"Autodesk AutoCAD Plant 3D 2021   3D-001.dwg"}</AppTitle>
          <Play />
          <TitleSearch aria-label="Search help" placeholder="Type a keyword or phrase" />
          <ToolBtn aria-label="Search"><Icon n="lens" s={11} /></ToolBtn>
          <Account><Icon n="user" s={11} />quinn@mgfx...<Caret /></Account>
          <ToolBtn $w={22} aria-label="App store"><Icon n="cart" s={10} /></ToolBtn>
          <ToolBtn $w={11} aria-label="Autodesk"><Icon n="adsk" s={11} /></ToolBtn>
          <ToolBtn $w={9} aria-label="More"><Caret /></ToolBtn>
          <Divider />
          <HelpBtn aria-label="Help"><span>?</span></HelpBtn>
          <ToolBtn $w={9} aria-label="Help menu"><Caret /></ToolBtn>
          <WindowButtons>
            <ToolBtn $w={17} aria-label="Minimize"><Icon n="min" s={9} /></ToolBtn>
            <ToolBtn $w={17} aria-label="Restore"><Icon n="restore" s={11} /></ToolBtn>
            <ToolBtn $w={17} aria-label="Close"><Icon n="close" s={11} /></ToolBtn>
          </WindowButtons>
        </TitleBar>
        <MenuTabs>
          {TABS.map((t, i) => <MenuTab key={t} $on={i === 0}>{t}</MenuTab>)}
          <ToolBtn $w={24} aria-label="Ribbon state"><Icon n="upbox" s={11} /><Caret /></ToolBtn>
        </MenuTabs>
        <RibbonBar />
        <FileTabs>
          <FileTab>Start</FileTab>
          <FileTab $on>3D-001*<Icon n="close" s={7} /></FileTab>
          <AddTab aria-label="New drawing"><Icon n="plus" s={7} /></AddTab>
        </FileTabs>
        <Main>
          <ProjectManager />
          <DrawingArea />
          <ToolPalettes />
        </Main>
        <Status>
          <Cell $w={34}>MODEL</Cell>
          {STATUS.map(([n, w, on], i) => (
            <Cell key={i} $w={w} $on={on} aria-label={n}>{n === "v" ? <Caret /> : n === "1:1" ? n : <Icon n={n} s={12} />}</Cell>
          ))}
        </Status>
      </AppFrame>
      <BottomBand />
    </Page>
  );
}
